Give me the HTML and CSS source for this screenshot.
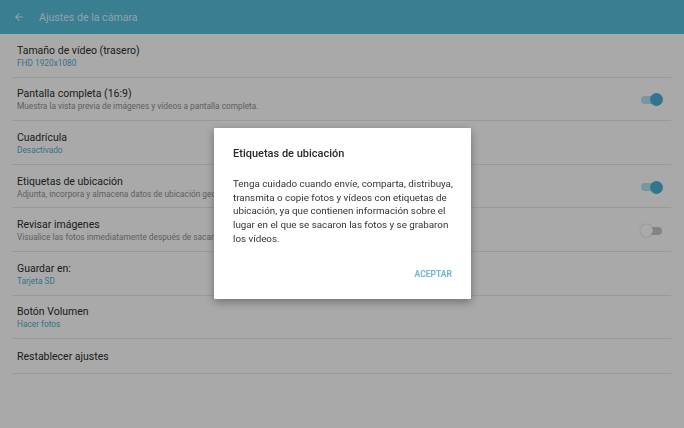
FILE: index.html
```html
<!DOCTYPE html>
<html lang="es">
<head>
  <meta charset="UTF-8">
  <meta name="viewport" content="width=device-width, initial-scale=1.0">
  <title>Ajustes de la cámara</title>
  <link rel="stylesheet" href="styles.css">
</head>
<body>
  <header class="appbar">
    <svg class="back" viewBox="0 0 24 24" width="12" height="12">
      <path d="M20 11H7.8l5.6-5.6L12 4l-8 8 8 8 1.4-1.4L7.8 13H20z" fill="currentColor"/>
    </svg>
    <span class="title">Ajustes de la cámara</span>
  </header>

  <ul class="settings">
    <li class="item">
      <div class="text">
        <div class="name">Tamaño de vídeo (trasero)</div>
        <div class="value">FHD 1920x1080</div>
      </div>
    </li>
    <li class="item">
      <div class="text">
        <div class="name">Pantalla completa (16:9)</div>
        <div class="desc">Muestra la vista previa de imágenes y vídeos a pantalla completa.</div>
      </div>
      <span class="switch on"></span>
    </li>
    <li class="item">
      <div class="text">
        <div class="name">Cuadrícula</div>
        <div class="value">Desactivado</div>
      </div>
    </li>
    <li class="item">
      <div class="text">
        <div class="name">Etiquetas de ubicación</div>
        <div class="desc">Adjunta, incorpora y almacena datos de ubicación geográfica en las fotos y vídeos.</div>
      </div>
      <span class="switch on"></span>
    </li>
    <li class="item">
      <div class="text">
        <div class="name">Revisar imágenes</div>
        <div class="desc">Visualice las fotos inmediatamente después de sacarlas.</div>
      </div>
      <span class="switch"></span>
    </li>
    <li class="item">
      <div class="text">
        <div class="name">Guardar en:</div>
        <div class="value">Tarjeta SD</div>
      </div>
    </li>
    <li class="item">
      <div class="text">
        <div class="name">Botón Volumen</div>
        <div class="value">Hacer fotos</div>
      </div>
    </li>
    <li class="item single">
      <div class="text">
        <div class="name">Restablecer ajustes</div>
      </div>
    </li>
  </ul>

  <div class="scrim">
    <div class="dialog">
      <div class="dialog-title">Etiquetas de ubicación</div>
      <p class="dialog-body">Tenga cuidado cuando envíe, comparta, distribuya, transmita o copie fotos y vídeos con etiquetas de ubicación, ya que contienen información sobre el lugar en el que se sacaron las fotos y se grabaron los vídeos.</p>
      <div class="dialog-actions">
        <button class="btn">ACEPTAR</button>
      </div>
    </div>
  </div>
</body>
</html>
```

FILE: styles.css
```css
:root {
  --bg: #f2f2f2;
  --bar: #54b5d2;
  --text: #222;
  --muted: #8a8a8a;
  --accent: #4fa6c4;
  --divider: #dcdcdc;
}
* {
  box-sizing: border-box;
}
body {
  margin: 0;
  width: 684px;
  height: 428px;
  overflow: hidden;
  background: var(--bg);
  font-family: Roboto, 'Noto Sans', sans-serif;
  color: var(--text);
}
.appbar {
  height: 34px;
  background: var(--bar);
  display: flex;
  align-items: center;
  padding-left: 13px;
  color: rgba(255, 255, 255, 0.72);
}
.appbar .back {
  margin-right: 14px;
}
.appbar .title {
  font-size: 10.6px;
}
.settings {
  list-style: none;
  margin: 0;
  padding: 0 13px;
}
.item {
  height: 43.6px;
  border-bottom: 1px solid var(--divider);
  display: flex;
  align-items: center;
  padding: 2px 9px 0 4px;
}
.item.single {
  height: 35px;
  padding-top: 1px;
}
.item .text {
  flex: 1;
  min-width: 0;
}
.item .name {
  font-size: 10.5px;
  line-height: 13px;
  color: #2a2a2a;
}
.item .value,
.item .desc {
  font-size: 8.3px;
  line-height: 12px;
  white-space: nowrap;
  overflow: hidden;
}
.item .value {
  color: var(--accent);
}
.item .desc {
  color: var(--muted);
}
.switch {
  position: relative;
  width: 21px;
  height: 8px;
  border-radius: 4px;
  background: #bdbdbd;
}
.switch:before {
  content: "";
  position: absolute;
  top: -2.5px;
  left: -1px;
  width: 13px;
  height: 13px;
  border-radius: 50%;
  background: #f4f4f4;
  box-shadow: 0 0 1px rgba(0, 0, 0, 0.35);
}
.switch.on {
  background: #a9d8e8;
}
.switch.on:before {
  left: 9px;
  background: #4aa8c9;
  box-shadow: none;
}
.scrim {
  position: fixed;
  inset: 0;
  background: rgba(0, 0, 0, 0.3);
  display: flex;
  justify-content: center;
  padding-top: 128px;
}
.dialog {
  width: 257px;
  height: 171px;
  margin-left: 1px;
  background: #fff;
  border-radius: 1px;
  box-shadow: 0 3px 10px rgba(0, 0, 0, 0.35);
  padding: 19px 18px 0 19px;
}
.dialog-title {
  font-size: 11px;
  font-weight: 500;
  line-height: 14px;
  color: #2a2a2a;
}
.dialog-body {
  margin: 16px 0 0;
  font-size: 9.8px;
  line-height: 13.7px;
  color: #333;
}
.dialog-actions {
  display: flex;
  justify-content: flex-end;
  margin-top: 23px;
  padding-right: 1px;
}
.btn {
  border: none;
  background: none;
  padding: 0;
  font-family: inherit;
  font-size: 8.5px;
  font-weight: 700;
  color: #72b6d0;
}
```
